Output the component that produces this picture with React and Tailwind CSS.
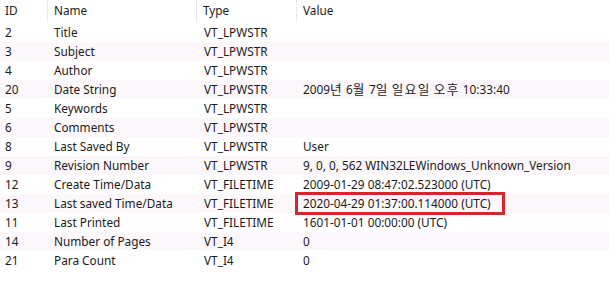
import React from "react";

const rows = [
  ["2", "Title", "VT_LPWSTR", ""],
  ["3", "Subject", "VT_LPWSTR", ""],
  ["4", "Author", "VT_LPWSTR", ""],
  ["20", "Date String", "VT_LPWSTR", "KR"],
  ["5", "Keywords", "VT_LPWSTR", ""],
  ["6", "Comments", "VT_LPWSTR", ""],
  ["8", "Last Saved By", "VT_LPWSTR", "User"],
  ["9", "Revision Number", "VT_LPWSTR", "9, 0, 0, 562 WIN32LEWindows_Unknown_Version"],
  ["12", "Create Time/Data", "VT_FILETIME", "2009-01-29 08:47:02.523000 (UTC)"],
  ["13", "Last saved Time/Data", "VT_FILETIME", "2020-04-29 01:37:00.114000 (UTC)"],
  ["11", "Last Printed", "VT_FILETIME", "1601-01-01 00:00:00 (UTC)"],
  ["14", "Number of Pages", "VT_I4", "0"],
  ["21", "Para Count", "VT_I4", "0"],
];

function Ko({ children }) {
  return <span className="text-[12.6px] tracking-[1.4px]">{children}</span>;
}

function KoreanDate() {
  return (
    <span>
      2009<Ko>년</Ko> 6<Ko>월</Ko> 7<Ko>일</Ko> <Ko>일요일</Ko> <Ko>오후</Ko> 10:33:40
    </span>
  );
}

export default function App() {
  return (
    <div
      className="w-[609px] h-[285px] bg-white text-[11.8px] text-[#1b1b1b] overflow-hidden"
      style={{ fontFamily: '"Noto Sans", "Noto Sans CJK KR", sans-serif' }}
    >
      <div className="grid grid-cols-[48px_149px_100px_1fr] h-[23px] items-center">
        <div className="pl-[5px] h-[22px] self-start flex items-center border-r border-[#e8e8e8]">ID</div>
        <div className="pl-[6px] h-[22px] self-start flex items-center border-r border-[#e8e8e8]">Name</div>
        <div className="pl-[6px] h-[22px] self-start flex items-center border-r border-[#e8e8e8]">Type</div>
        <div className="pl-[6px] h-[22px] self-start flex items-center">Value</div>
      </div>
      {rows.map((r, i) => (
        <div
          key={i}
          className={
            "grid grid-cols-[48px_149px_100px_1fr] h-[19px] items-center " +
            (i % 2 === 1 ? "bg-[#fcf7fb]" : "bg-white")
          }
        >
          <div className="pl-[5px] leading-[19px]">{r[0]}</div>
          <div className="pl-[6px] leading-[19px]">{r[1]}</div>
          <div className="pl-[7px] leading-[19px]">{r[2]}</div>
          <div className="pl-[6px] leading-[19px] relative whitespace-nowrap">
            {r[3] === "KR" ? <KoreanDate /> : r[3]}
            {r[0] === "13" && (
              <div className="absolute left-[-2px] top-[-2px] w-[210px] h-[23px] border-[3px] border-[#d5262c]" />
            )}
          </div>
        </div>
      ))}
    </div>
  );
}
